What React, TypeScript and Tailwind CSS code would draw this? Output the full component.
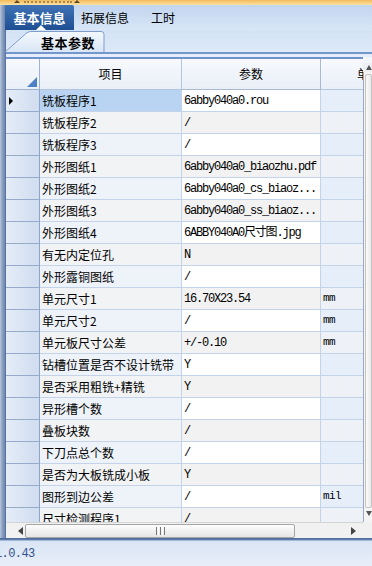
import React from "react";

const rows: [string, string, string][] = [
  ["铣板程序1", "6abby040a0.rou", ""],
  ["铣板程序2", "/", ""],
  ["铣板程序3", "/", ""],
  ["外形图纸1", "6abby040a0_biaozhu.pdf", ""],
  ["外形图纸2", "6abby040a0_cs_biaoz...", ""],
  ["外形图纸3", "6abby040a0_ss_biaoz...", ""],
  ["外形图纸4", "6ABBY040A0尺寸图.jpg", ""],
  ["有无内定位孔", "N", ""],
  ["外形露铜图纸", "/", ""],
  ["单元尺寸1", "16.70X23.54", "mm"],
  ["单元尺寸2", "/", "mm"],
  ["单元板尺寸公差", "+/-0.10", "mm"],
  ["钻槽位置是否不设计铣带", "Y", ""],
  ["是否采用粗铣+精铣", "Y", ""],
  ["异形槽个数", "/", ""],
  ["叠板块数", "/", ""],
  ["下刀点总个数", "/", ""],
  ["是否为大板铣成小板", "Y", ""],
  ["图形到边公差", "/", "mil"],
  ["尺寸检测程序1", "/", ""],
];

export default function App() {
  return (
    <div className="w-[372px] h-[566px] overflow-hidden flex flex-col bg-[#dfe9f6] font-['Noto_Sans_CJK_SC',sans-serif] text-black">
      {/* gold top bar */}
      <div className="h-[5px] shrink-0 bg-gradient-to-b from-[#f3b95a] to-[#fbe2a0] relative">
        <div className="absolute left-[14px] top-[0px] w-0 h-0 border-x-[3px] border-x-transparent border-b-[3px] border-b-[#5a4a2a]" />
        <div className="absolute left-[24px] top-[1px] w-[48px] h-[2px] border-t-2 border-dotted border-[#a88a4a]" />
        <div className="absolute left-[74px] top-[0px] w-0 h-0 border-x-[3px] border-x-transparent border-b-[3px] border-b-[#5a4a2a]" />
      </div>
      <div className="flex flex-1 min-h-0">
        {/* left stripe */}
        <div className="w-[6px] shrink-0 bg-gradient-to-r from-[#b7c6dc] via-[#8a9fc0] to-[#6f86ad] border-r border-[#5b73a0]" />
        <div className="flex-1 flex flex-col min-w-0">
          {/* main tab row */}
          <div className="h-[25px] shrink-0 flex items-stretch bg-gradient-to-b from-[#c2d5ee] to-[#d8e6f7]">
            <div className="relative w-[69px] ml-[-1px] flex items-center justify-center bg-gradient-to-b from-[#3f72b6] to-[#1f4f93] rounded-t-[2px] text-white font-bold text-[13px]">
              基本信息
              <div className="absolute bottom-0 left-[31px] w-0 h-0 border-x-[5px] border-x-transparent border-b-[5px] border-b-white" />
            </div>
            <div className="flex items-center ml-[7px] text-[12px]">拓展信息</div>
            <div className="flex items-center ml-[22px] text-[12px]">工时</div>
          </div>
          {/* sub tab row */}
          <div className="h-[22px] shrink-0 flex items-end bg-gradient-to-b from-[#d3e2f5] to-[#dde9f8]">
            <div className="relative w-[100px] h-[21px] ml-[-1px]">
              <svg className="absolute inset-0" width="100" height="21" viewBox="0 0 100 21">
                <defs>
                  <linearGradient id="tabg" x1="0" y1="0" x2="0" y2="1">
                    <stop offset="0" stopColor="#f4f8fd" />
                    <stop offset="1" stopColor="#d9e6f6" />
                  </linearGradient>
                </defs>
                <path d="M0 21 L21 2.5 Q23 0.5 26 0.5 L96 0.5 Q99 0.5 99 3.5 L99 21" fill="url(#tabg)" stroke="#7f9dcc" strokeWidth="1" />
              </svg>
              <div className="absolute left-[36px] top-[2px] h-[19px] flex items-center font-bold text-[13px] tracking-[0.5px]">基本参数</div>
            </div>
          </div>
          <div className="h-[2px] shrink-0 bg-[#7397cd]" />
          <div className="h-[3px] shrink-0 bg-[#e4edf9]" />
          {/* grid + vscroll */}
          <div className="flex-1 min-h-0 flex">
            <div className="flex-1 min-w-0 overflow-hidden flex flex-col bg-white">
              {/* header */}
              <div className="h-[33px] shrink-0 flex border-t-2 border-[#6f94cb] bg-gradient-to-b from-[#f7f9fd] to-[#e9eff8]">
                <div className="relative w-[34px] shrink-0 border-r border-b border-[#9eb2d2]">
                  <div className="absolute right-[2px] bottom-[2px] w-0 h-0 border-l-[10px] border-l-transparent border-b-[10px] border-b-[#4f80c6]" />
                </div>
                <div className="w-[142px] shrink-0 border-r border-b border-[#b4c5de] flex items-center justify-center text-[12px]">项目</div>
                <div className="w-[139px] shrink-0 border-r border-b border-[#a9b9cf] flex items-center justify-center text-[12px]">参数</div>
                <div className="w-[96px] shrink-0 border-b border-[#b4c5de] flex items-center justify-center text-[12px]">单位</div>
              </div>
              {/* rows */}
              <div className="flex-1 min-h-0 overflow-hidden flex flex-col">
                {rows.map((r, i) => (
                  <div key={i} className="h-[22px] shrink-0 flex">
                    <div className="w-[34px] shrink-0 border-b border-r border-b-[#97abcc] border-r-[#8ea4c8] bg-gradient-to-r from-[#e4ecf7] to-[#d0ddf0] flex items-center pl-[3px]">
                      {i === 0 && <div className="w-0 h-0 border-l-[4px] border-l-black border-y-[4px] border-y-transparent" />}
                    </div>
                    <div
                      className={
                        i === 0
                          ? "w-[142px] shrink-0 border-b border-r border-[#c3d3ea] bg-[#b8d4f2] flex items-center pl-[2px] text-[12px] whitespace-nowrap"
                          : i % 2 === 0
                          ? "w-[142px] shrink-0 border-b border-r border-[#c3d3ea] bg-[#eef3fa] flex items-center pl-[2px] text-[12px] whitespace-nowrap"
                          : "w-[142px] shrink-0 border-b border-r border-[#c3d3ea] bg-[#f2f3f5] flex items-center pl-[2px] text-[12px] whitespace-nowrap"
                      }
                    >
                      {r[0]}
                    </div>
                    <div
                      className={
                        i % 2 === 0
                          ? "w-[139px] shrink-0 border-b border-r border-[#c3d3ea] bg-white flex items-center pl-[2px] text-[12px] tracking-[-1.2px] whitespace-nowrap font-['Liberation_Mono','Noto_Sans_CJK_SC',monospace]"
                          : "w-[139px] shrink-0 border-b border-r border-[#c3d3ea] bg-[#f2f2f2] flex items-center pl-[2px] text-[12px] tracking-[-1.2px] whitespace-nowrap font-['Liberation_Mono','Noto_Sans_CJK_SC',monospace]"
                      }
                    >
                      {r[1]}
                    </div>
                    <div
                      className={
                        i % 2 === 0
                          ? "w-[96px] shrink-0 border-b border-[#c3d3ea] bg-[#e6eefa] flex items-center pl-[2px] text-[11px] tracking-[-0.6px] whitespace-nowrap font-['Liberation_Mono',monospace]"
                          : "w-[96px] shrink-0 border-b border-[#c3d3ea] bg-[#eef1f5] flex items-center pl-[2px] text-[11px] tracking-[-0.6px] whitespace-nowrap font-['Liberation_Mono',monospace]"
                      }
                    >
                      {r[2]}
                    </div>
                  </div>
                ))}
              </div>
            </div>
            {/* vertical scrollbar */}
            <div className="w-[9px] shrink-0 flex flex-col bg-[#eef0f3]">
              <div className="h-[6px] shrink-0 bg-[#f3f6fb]" />
              <div className="h-[9px] shrink-0 flex items-center justify-end">
                <div className="w-0 h-0 border-x-[3px] border-x-transparent border-b-[5px] border-b-[#555]" />
              </div>
              <div className="flex-1 border-l border-[#9aaac2] bg-[#f4f4f4] flex flex-col py-[2px]">
                <div className="flex-1 ml-[1px] border border-[#c4c4c4] rounded-[2px] bg-gradient-to-r from-[#fbfbfb] to-[#e9e9e9]" />
              </div>
              <div className="h-[12px] shrink-0 flex items-start justify-end pt-[1px] border-l border-[#9aaac2] bg-[#f4f4f4]">
                <div className="w-0 h-0 border-x-[3px] border-x-transparent border-t-[5px] border-t-[#555]" />
              </div>
            </div>
          </div>
          {/* horizontal scrollbar */}
          <div className="h-[16px] shrink-0 flex">
            <div className="flex-1 flex items-center bg-[#f1f1f1] border-t border-[#d4d4d4]">
              <div className="w-[19px] shrink-0 flex items-center justify-end pr-[2px]">
                <div className="w-0 h-0 border-y-[4px] border-y-transparent border-r-[5px] border-r-[#444]" />
              </div>
              <div className="w-[270px] h-[14px] shrink-0 border border-[#a6a6a6] rounded-[2px] bg-gradient-to-b from-[#fdfdfd] to-[#e6e6e6] flex items-center justify-center">
                <div className="flex gap-[1px] h-[8px]">
                  <div className="w-[1px] bg-[#777]" />
                  <div className="w-[1px] bg-[#fff]" />
                  <div className="w-[1px] bg-[#777]" />
                  <div className="w-[1px] bg-[#fff]" />
                  <div className="w-[1px] bg-[#777]" />
                </div>
              </div>
              <div className="flex-1" />
              <div className="w-[12px] shrink-0 flex items-center">
                <div className="w-0 h-0 border-y-[4px] border-y-transparent border-l-[5px] border-l-[#444]" />
              </div>
            </div>
            <div className="w-[9px] shrink-0 bg-[#f1f1f1]" />
          </div>
        </div>
      </div>
      {/* bottom line */}
      <div className="h-[3px] shrink-0 bg-gradient-to-b from-[#4b6a9a] via-[#5d7bab] to-[#c9d7ec]" />
      {/* footer */}
      <div className="h-[25px] shrink-0 bg-gradient-to-b from-[#dae5f4] to-[#e7eef9] flex items-center overflow-hidden">
        <span className="ml-[-5px] text-[12px] tracking-[-0.6px] text-[#34528a] font-['Liberation_Mono',monospace]">1.0.43</span>
      </div>
    </div>
  );
}
